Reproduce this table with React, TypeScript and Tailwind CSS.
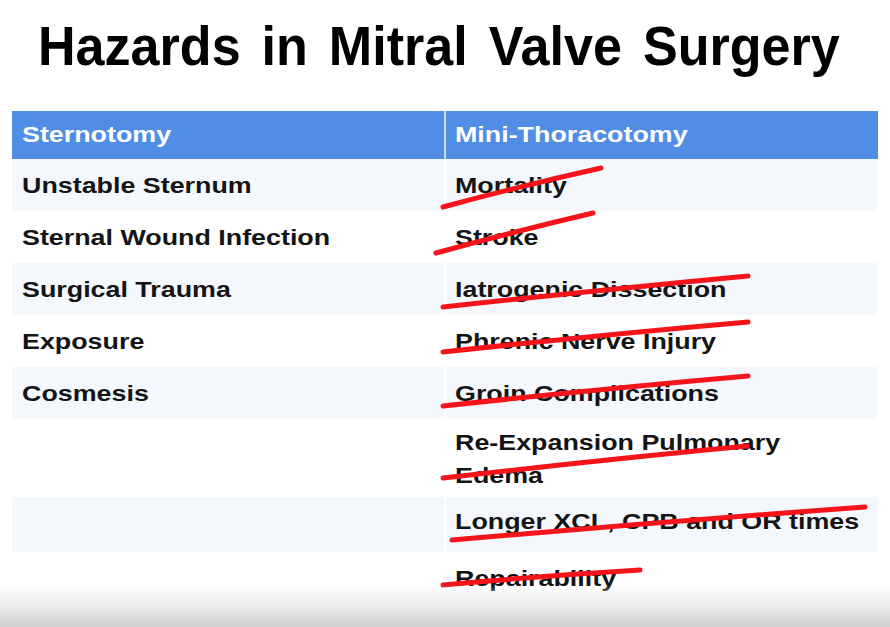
import React from 'react'

type Row = { left: string; right: React.ReactNode; h: string; bg: string; align?: string }

const rows: Row[] = [
    { left: 'Unstable Sternum', right: 'Mortality', h: 'h-[52px]', bg: 'bg-[#f4f7fc]' },
    { left: 'Sternal Wound Infection', right: 'Stroke', h: 'h-[52px]', bg: 'bg-white' },
    { left: 'Surgical Trauma', right: 'Iatrogenic Dissection', h: 'h-[52px]', bg: 'bg-[#f4f7fc]' },
    { left: 'Exposure', right: 'Phrenic Nerve Injury', h: 'h-[52px]', bg: 'bg-white' },
    { left: 'Cosmesis', right: 'Groin Complications', h: 'h-[52px]', bg: 'bg-[#f4f7fc]' },
    {
        left: '',
        right: (
            <>
                Re-Expansion Pulmonary
                <br />
                Edema
            </>
        ),
        h: 'h-[78px]',
        bg: 'bg-white',
        align: 'items-start pt-[7px]',
    },
    { left: '', right: 'Longer XCL, CPB and OR times', h: 'h-[55px]', bg: 'bg-[#f4f7fc]', align: 'items-start pt-[8px]' },
    { left: '', right: 'Repairability', h: 'h-[57px]', bg: 'bg-white', align: 'items-start pt-[10px]' },
]

// red pen strokes drawn over the second column, page coordinates
const strikes = [
    'M443 207 Q520 186 601 168',
    'M436 253 Q512 232 593 213',
    'M443 307 Q600 290 748 276',
    'M443 352 Q600 335 748 322',
    'M443 406 Q600 389 748 376',
    'M443 478 Q600 460 747 446',
    'M452 540 Q660 522 865 507',
    'M443 585 Q540 576 640 570',
]

const cellText =
    "inline-block origin-left scale-x-[1.22] font-['Liberation_Sans',Arial,sans-serif] font-bold text-[22px] text-[#141414] whitespace-nowrap"

export default function App() {
    return (
        <div className="relative w-[890px] h-[627px] overflow-hidden bg-white">
            <h1 className="pl-[38px] pt-[18px] h-[111px] leading-none text-[56px] font-bold text-black font-['Liberation_Sans',Arial,sans-serif]">
                <span className="inline-block origin-left scale-x-[0.93] whitespace-nowrap [word-spacing:7px]">
                    Hazards in Mitral Valve Surgery
                </span>
            </h1>

            <div className="ml-[12px] w-[866px] grid grid-cols-[432px_2px_432px]">
                <div className="h-[48px] bg-[#4f8ee4] flex items-center pl-[10px] pb-[2px]">
                    <span className={`${cellText} text-white`}>Sternotomy</span>
                </div>
                <div className="bg-[#c9dbf5]" />
                <div className="h-[48px] bg-[#4f8ee4] flex items-center pl-[9px] pb-[2px]">
                    <span className={`${cellText} text-white`}>Mini-Thoracotomy</span>
                </div>

                {rows.map((r, i) => (
                    <React.Fragment key={i}>
                        <div className={`${r.h} ${r.bg} flex ${r.align ?? 'items-center'} pl-[10px]`}>
                            <span className={cellText}>{r.left}</span>
                        </div>
                        <div className="bg-white" />
                        <div className={`${r.h} ${r.bg} flex ${r.align ?? 'items-center'} pl-[9px]`}>
                            <span className={`${cellText} leading-[33px]`}>{r.right}</span>
                        </div>
                    </React.Fragment>
                ))}
            </div>

            <svg className="absolute inset-0 pointer-events-none" width="890" height="627" viewBox="0 0 890 627">
                {strikes.map((d, i) => (
                    <path key={i} d={d} fill="none" stroke="#f5141a" strokeWidth="5" strokeLinecap="round" />
                ))}
            </svg>

            <div className="absolute left-0 right-0 bottom-0 h-[42px] pointer-events-none bg-gradient-to-b from-white/0 via-[#ececec] to-[#cfcfcf]" />
        </div>
    )
}
